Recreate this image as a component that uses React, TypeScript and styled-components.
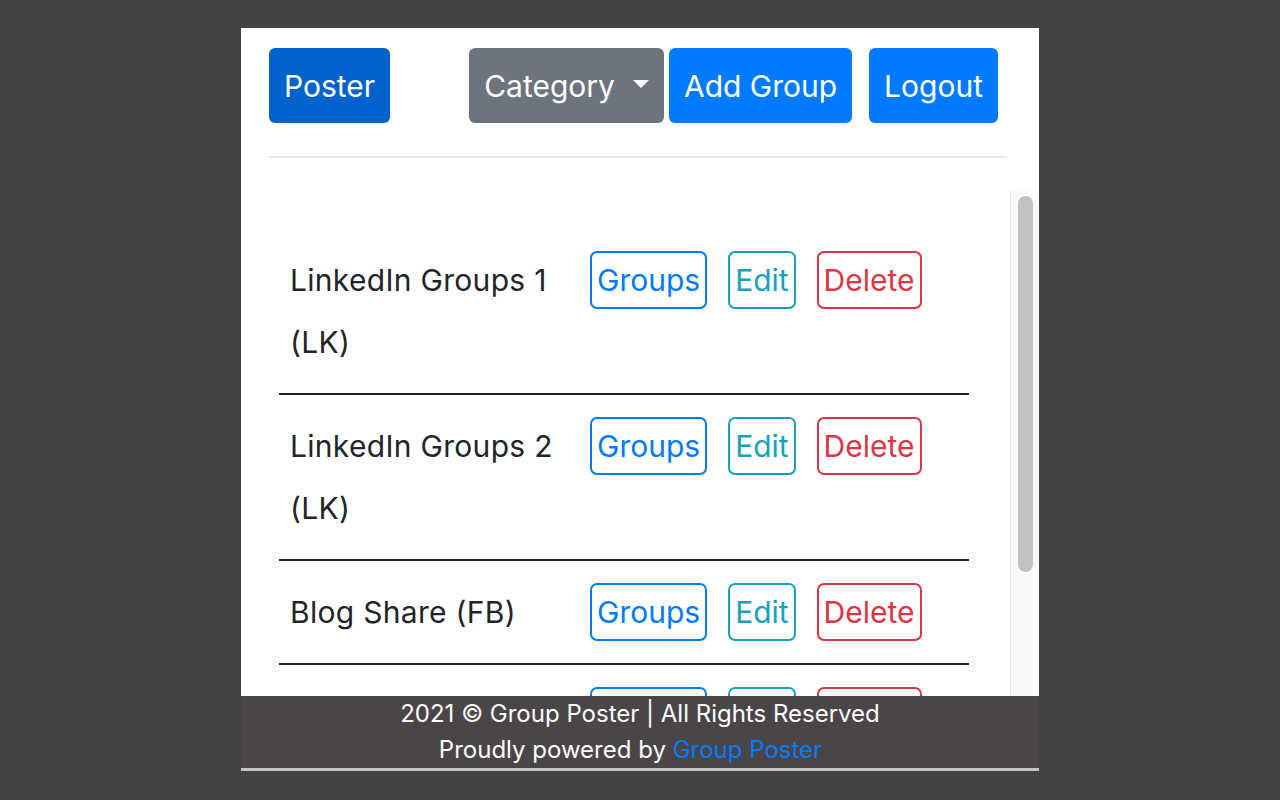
import styled, { createGlobalStyle, css } from "styled-components";

type Tone = "primary" | "active" | "secondary" | "info" | "danger";

const colors: Record<Tone, string> = {
  primary: "#007bff",
  active: "#0062cc",
  secondary: "#6c757d",
  info: "#17a2b8",
  danger: "#dc3545",
};

const groups = [
  { id: 1, name: "LinkedIn Groups 1 (LK)" },
  { id: 2, name: "LinkedIn Groups 2 (LK)" },
  { id: 3, name: "Blog Share (FB)" },
  { id: 4, name: "Blog Share (LK)" },
];

const GlobalStyle = createGlobalStyle`
  * {
    box-sizing: border-box;
  }
  body {
    margin: 0;
    background: #434343;
    font-family: Inter, "Noto Sans", "Liberation Sans", sans-serif;
  }
`;

const App: React.FC = () => {
  return (
    <>
      <GlobalStyle />
      <Panel>
        <Header>
          <NavButton $tone="active">Poster</NavButton>
          <NavGroup>
            <NavButton $tone="secondary" $caret>
              Category
            </NavButton>
            <NavButton $tone="primary">Add Group</NavButton>
            <NavButton $tone="primary" $spaced>
              Logout
            </NavButton>
          </NavGroup>
        </Header>
        <ScrollArea>
          <Viewport>
            <List>
              {groups.map((group) => (
                <Row key={group.id}>
                  <Name>{group.name}</Name>
                  <Actions>
                    <OutlineButton $tone="primary">Groups</OutlineButton>
                    <OutlineButton $tone="info">Edit</OutlineButton>
                    <OutlineButton $tone="danger">Delete</OutlineButton>
                  </Actions>
                </Row>
              ))}
            </List>
          </Viewport>
          <Track>
            <Thumb />
          </Track>
        </ScrollArea>
        <Footer>
          <FooterLine>2021 © Group Poster | All Rights Reserved</FooterLine>
          <FooterLine $shift>
            Proudly powered by <FooterLink href="#">Group Poster</FooterLink>
          </FooterLine>
        </Footer>
      </Panel>
    </>
  );
};

export default App;

const Panel = styled.div`
  width: 798px;
  margin: 28px auto 0;
  background: #fff;
  display: flex;
  flex-direction: column;
`;

const Header = styled.header`
  margin: 0 32px 0 28px;
  padding: 20px 9px 33px 0;
  border-bottom: 2px solid #e6e6e6;
  display: flex;
  justify-content: space-between;
  align-items: center;
`;

const NavGroup = styled.div`
  display: flex;
  align-items: center;
  gap: 5px;
`;

const NavButton = styled.button<{ $tone: Tone; $caret?: boolean; $spaced?: boolean }>`
  height: 75px;
  padding: 0 15px;
  border: none;
  border-radius: 6px;
  background: ${(p) => colors[p.$tone]};
  color: #fff;
  font-family: inherit;
  font-size: 30px;
  line-height: 42px;
  display: flex;
  align-items: center;
  margin-left: ${(p) => (p.$spaced ? "12px" : "0")};

  ${(p) =>
    p.$caret &&
    css`
      &::after {
        content: "";
        margin-left: 18px;
        border-top: 8px solid #fff;
        border-left: 8.5px solid transparent;
        border-right: 8.5px solid transparent;
        margin-top: -4px;
      }
    `}
`;

const ScrollArea = styled.div`
  margin-top: 33px;
  height: 505px;
  display: flex;
  overflow: hidden;
`;

const Viewport = styled.div`
  flex: 1;
  overflow: hidden;
`;

const Track = styled.div`
  width: 29px;
  flex-shrink: 0;
  background: #fafafa;
  border-left: 1px solid #e4e4e4;
  padding: 5px 6px 0 7px;
`;

const Thumb = styled.div`
  height: 376px;
  border-radius: 8px;
  background: #c1c1c1;
`;

const List = styled.div`
  margin: 0 41px 0 38px;
  padding-top: 38px;
`;

const Row = styled.div`
  display: flex;
  align-items: flex-start;
  padding: 20px 0;
  border-bottom: 2px solid #222;
`;

const Name = styled.div`
  width: 311px;
  padding: 0 11px;
  font-size: 30px;
  letter-spacing: 0.3px;
  line-height: 62px;
  color: #212529;
`;

const Actions = styled.div`
  display: flex;
  gap: 21px;
  padding-top: 2px;
`;

const OutlineButton = styled.button<{ $tone: Tone }>`
  height: 58px;
  padding: 0 5px;
  border: 2px solid ${(p) => colors[p.$tone]};
  border-radius: 7px;
  background: transparent;
  color: ${(p) => colors[p.$tone]};
  font-family: inherit;
  font-size: 30px;
  line-height: 42px;
`;

const Footer = styled.footer`
  height: 75px;
  background: #4a4546;
  border-bottom: 3px solid #c4c4c4;
  color: #fff;
  text-align: center;
  font-size: 24px;
`;

const FooterLine = styled.div<{ $shift?: boolean }>`
  height: 36px;
  line-height: 36px;
  margin-right: ${(p) => (p.$shift ? "19px" : "0")};
`;

const FooterLink = styled.a`
  color: #007bff;
  text-decoration: none;
`;
